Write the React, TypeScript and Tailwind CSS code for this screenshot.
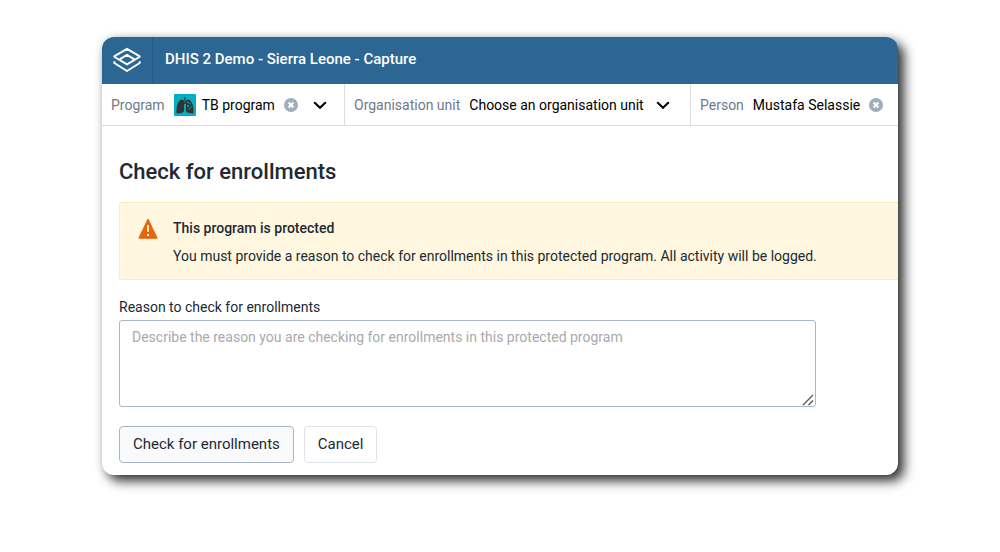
import React, { useState } from 'react';

interface SelectorProps {
  label: string;
  children: React.ReactNode;
  className?: string;
}

function Selector({ label, children, className = '' }: SelectorProps) {
  return (
    <div className={`flex items-center gap-[9px] pl-[9px] whitespace-nowrap ${className}`}>
      <span className="text-[#6e7a8a]">{label}</span>
      {children}
    </div>
  );
}

function ClearButton({ label }: { label: string }) {
  return (
    <button type="button" aria-label={label} className="shrink-0">
      <svg width="14" height="14" viewBox="0 0 14 14">
        <circle cx="7" cy="7" r="7" fill="#a0adba" />
        <path d="M4.6 4.6l4.8 4.8M9.4 4.6L4.6 9.4" stroke="#fff" strokeWidth="2.1" />
      </svg>
    </button>
  );
}

function Chevron() {
  return (
    <svg width="14" height="14" viewBox="0 0 14 14" fill="none" className="shrink-0" aria-hidden="true">
      <path d="M1.2 4.2L7 9.8l5.8-5.6" stroke="#000" strokeWidth="2.1" />
    </svg>
  );
}

function Logo() {
  return (
    <svg width="28" height="26" viewBox="0 0 28 26" fill="none" stroke="#fff" strokeWidth="2" strokeLinejoin="round" aria-hidden="true">
      <path d="M14 1.8L26.4 9.2Q27 9.6 26.4 10L14 17.4 1.6 10Q1 9.6 1.6 9.2Z" />
      <path d="M7.4 13V11.8L14 7.8 20.6 11.8V13" strokeLinejoin="miter" />
      <path d="M1.3 14.2V16L14 24 26.7 16V14.2" />
    </svg>
  );
}

function LungsIcon() {
  return (
    <svg width="22" height="22" viewBox="0 0 22 22" className="shrink-0" aria-hidden="true">
      <rect width="22" height="22" rx="1" fill="#06aec2" />
      <path d="M11 3v6M11 8.5l-2 2M11 8.5l2 2" stroke="#333" strokeWidth="1.2" fill="none" />
      <path d="M8.2 5.4c1 0 1.7.8 1.8 2.4l.1 8.2c0 2-1.5 2.8-3.5 3-1.7.3-3.7 1-4 .1-.5-3.5.3-9.5 3.2-12.5.8-.8 1.7-1.2 2.4-1.2z" fill="#333" />
      <path d="M13.8 5.4c-1 0-1.7.8-1.8 2.4l-.1 8.2c0 2 1.5 2.8 3.5 3 1.7.3 3.7 1 4 .1.5-3.5-.3-9.5-3.2-12.5-.8-.8-1.7-1.2-2.4-1.2z" fill="#333" />
      <g fill="#06aec2">
        <circle cx="14" cy="8.5" r=".9" />
        <circle cx="16.3" cy="9.8" r=".8" />
        <circle cx="14" cy="12" r=".9" />
        <circle cx="17" cy="13" r=".8" />
        <circle cx="15" cy="14.8" r=".8" />
      </g>
    </svg>
  );
}

function WarningIcon() {
  return (
    <svg width="20" height="21" viewBox="0 0 20 21" className="shrink-0" aria-hidden="true">
      <path d="M10 1L19.2 20.2H.8z" fill="#e8650c" stroke="#e8650c" strokeLinejoin="round" />
      <path d="M10 7v6.8M10 16v2" stroke="#fff3d6" strokeWidth="2" />
    </svg>
  );
}

export default function App() {
  const [reason, setReason] = useState('');

  return (
    <div className="px-[102px] py-[37px] font-[Roboto,sans-serif] text-sm text-[#212934]">
      <div className="overflow-hidden rounded-xl bg-white shadow-[6px_6px_12px_0_rgba(0,0,0,0.8),0_0_8px_rgba(0,0,0,0.12)]">
        <header className="flex h-[47px] items-stretch bg-[#2c6693] text-white">
          <a href="#" aria-label="Home" className="flex w-[51px] items-center justify-center border-r border-[#265b86] pb-0.5">
            <Logo />
          </a>
          <span className="flex items-center pb-0.5 pl-3 text-[15px] font-medium">DHIS 2 Demo - Sierra Leone - Capture</span>
        </header>

        <nav className="flex h-[42px] border-b border-[#d5dde5] text-black">
          <Selector label="Program" className="w-[243px] border-r border-[#d5dde5]">
            <span className="flex items-center gap-1.5">
              <LungsIcon />
              TB program
            </span>
            <ClearButton label="Clear program" />
            <button type="button" aria-label="Choose program" className="ml-1.5">
              <Chevron />
            </button>
          </Selector>
          <Selector label="Organisation unit" className="w-[346px] border-r border-[#d5dde5]">
            <button type="button" className="flex items-center gap-3">
              Choose an organisation unit
              <Chevron />
            </button>
          </Selector>
          <Selector label="Person">
            <span>Mustafa Selassie</span>
            <ClearButton label="Clear person" />
          </Selector>
        </nav>

        <main className="pt-8 pb-3 pl-[17px]">
          <h1 className="text-[22px] leading-7 font-medium">Check for enrollments</h1>

          <div role="alert" className="mt-4 flex gap-[15px] rounded-l-[3px] border border-r-0 border-[#ffecb3] bg-[#fff7e0] pt-[15px] pb-[13px] pl-[18px]">
            <WarningIcon />
            <div>
              <p className="font-medium">This program is protected</p>
              <p className="mt-2">
                You must provide a reason to check for enrollments in this protected program. All activity will be logged.
              </p>
            </div>
          </div>

          <form onSubmit={event => event.preventDefault()}>
            <label htmlFor="reason" className="mt-[17px] block">
              Reason to check for enrollments
            </label>
            <div className="relative mt-[3px] max-w-[697px]">
              <textarea
                id="reason"
                value={reason}
                onChange={event => setReason(event.target.value)}
                placeholder="Describe the reason you are checking for enrollments in this protected program"
                className="block h-[87px] w-full resize-y rounded-[3px] border border-[#a9b7c6] bg-white px-3 py-1.5 outline-none placeholder:text-[#aaaaaa] [&::-webkit-resizer]:bg-transparent"
              />
              <svg
                width="12"
                height="12"
                viewBox="0 0 12 12"
                className="pointer-events-none absolute right-0.5 bottom-px"
                aria-hidden="true"
              >
                <path d="M1 11L11 1M6.5 11L11 6.5" stroke="#555" strokeWidth="1.3" />
              </svg>
            </div>

            <div className="mt-[19px] flex gap-2.5 text-[15px]">
              <button type="submit" className="h-[37px] rounded-[4px] border border-[#a9b7c6] bg-[#f9fafb] px-[13px]">
                Check for enrollments
              </button>
              <button type="button" className="h-[37px] rounded-[4px] border border-[#dfe4ea] bg-white px-[13px]">
                Cancel
              </button>
            </div>
          </form>
        </main>
      </div>
    </div>
  );
}
